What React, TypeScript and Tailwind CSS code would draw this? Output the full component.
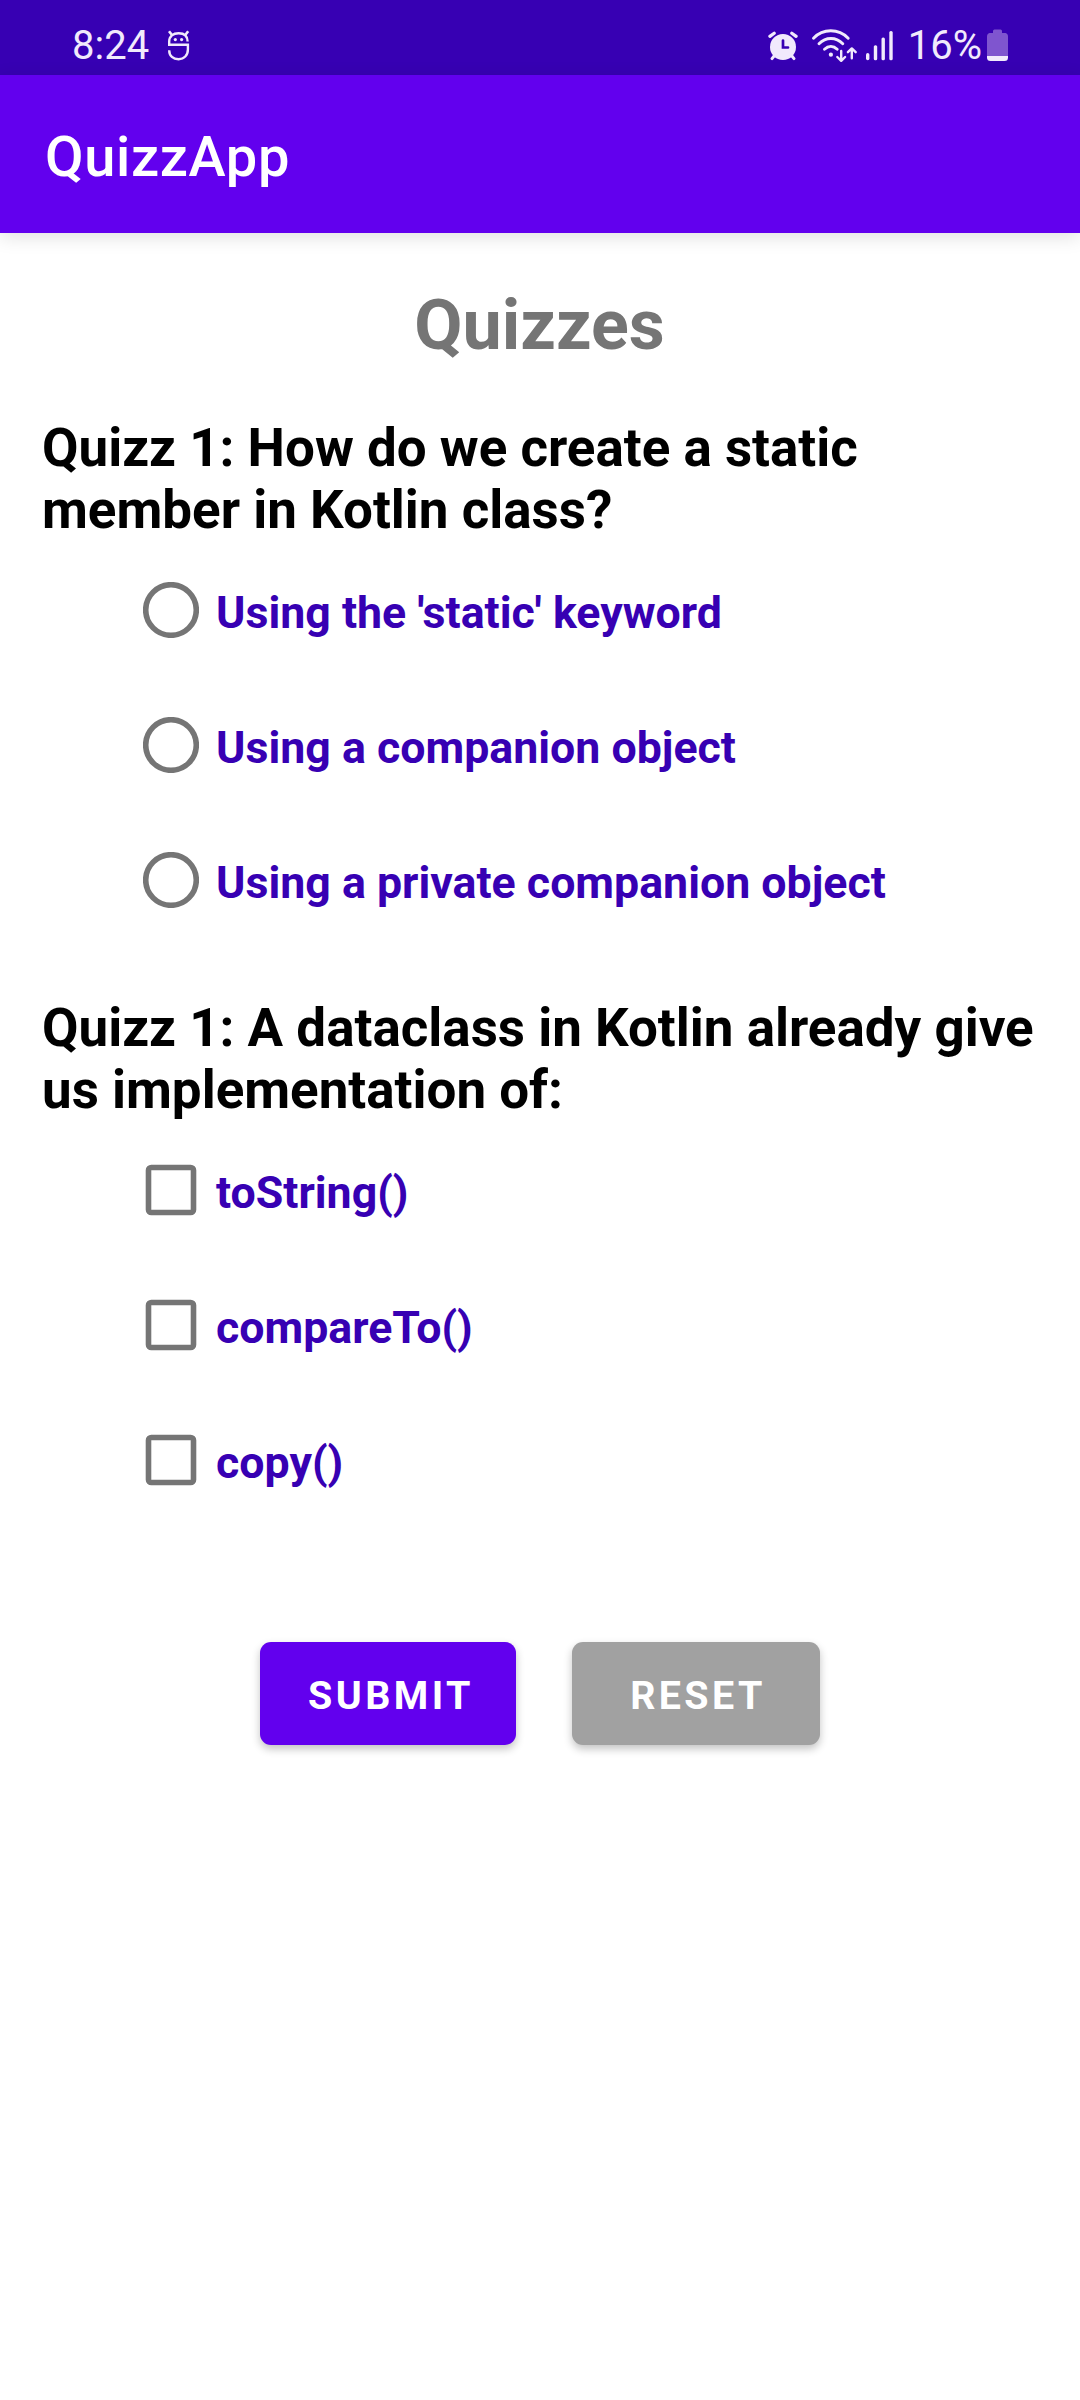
import React from "react";

function ProfileIcon() {
  return (
    <svg className="ml-[18px] mt-[30px] h-8 w-6" viewBox="0 0 24 32" fill="none" stroke="currentColor" strokeWidth="2.4">
      <path d="M2 1.2L5 5M21.2 1.2L18.2 5" strokeWidth="2.6" />
      <path d="M20.6 11.6C20.6 6 17 3.2 11.6 3.2S2.2 6 2.2 11.6V14.8H20.9V19.5C20.9 25.3 17 29.2 11.6 29.2S2.2 26 2.2 20.2" />
      <circle cx="8.3" cy="9.6" r="1.6" fill="currentColor" stroke="none" />
      <circle cx="14.6" cy="9.6" r="1.6" fill="currentColor" stroke="none" />
    </svg>
  );
}

function AlarmIcon() {
  return (
    <svg className="mt-[30px] h-8 w-[30px]" viewBox="0 0 30 32" fill="none" stroke="currentColor" strokeLinecap="round">
      <circle cx="15" cy="17" r="13" fill="currentColor" stroke="none" />
      <path d="M1.9 6.4L6.2 3.2M28.1 6.4L23.8 3.2" strokeWidth="3.2" />
      <path d="M6.5 25.5L4 28.6M23.5 25.5L26 28.6" strokeWidth="3" />
      <path d="M15 10.5V17.5H20" stroke="#3700b3" strokeWidth="2.7" />
    </svg>
  );
}

function WifiIcon() {
  return (
    <svg className="ml-[13px] mt-[28px] h-9 w-[47px]" viewBox="0 0 47 36" fill="none" stroke="currentColor" strokeLinecap="round" strokeWidth="2.9">
      <path d="M2.5 10.2C12 .3 27.5 .3 37.2 10.2" />
      <path d="M8 15.8C14.8 8.7 25 8.7 31.8 15.8" />
      <path d="M13.5 21.2C17.4 17.4 22.3 17.4 26.2 21.2" />
      <circle cx="19.9" cy="26.7" r="2.1" fill="currentColor" stroke="none" />
      <path d="M30.2 23V32.2M26.3 29L30.2 32.8L34.1 29" strokeWidth="2.4" strokeLinejoin="round" />
      <path d="M40.8 30.3V21M36.9 24.2L40.8 20.4L44.7 24.2" strokeWidth="2.4" strokeLinejoin="round" />
    </svg>
  );
}

function SignalIcon() {
  return (
    <svg className="ml-[8px] mt-[30px] h-8 w-7" viewBox="0 0 28 32" fill="currentColor">
      <rect x="0" y="23" width="3.4" height="7.3" rx="1.7" />
      <rect x="7.8" y="15.2" width="3.4" height="15.1" rx="1.5" />
      <rect x="15.5" y="7.4" width="3.4" height="22.9" rx="1.5" />
      <rect x="23.3" y="1" width="3.4" height="29.3" rx="1.5" />
    </svg>
  );
}

function BatteryIcon() {
  return (
    <svg className="ml-[5px] mt-[29px] h-8 w-[22px]" viewBox="0 0 22 32">
      <path d="M7.5 0.5H13.5Q15 .5 15 2V4H18.5Q21 4.5 21 7.5V27H0V7.5Q0 4.5 2.5 4H6V2Q6 .5 7.5 .5Z" fill="#7f55cf" />
      <path d="M0 27H21V28.5Q21 32 17.5 32H3.5Q0 32 0 28.5Z" fill="#f1eafc" />
    </svg>
  );
}

function Control({ kind }: { kind: "radio" | "checkbox" }) {
  return (
    <svg className="size-14" viewBox="0 0 56 56" fill="none" stroke="#757575" strokeWidth="5.6">
      {kind === "radio" ? (
        <circle cx="28" cy="28" r="25.3" />
      ) : (
        <rect x="5.5" y="5.5" width="45" height="45" rx="2.8" />
      )}
    </svg>
  );
}

function Question({ children }: { children: React.ReactNode }) {
  return <h2 className="pl-[42px] pr-8 text-[52.95px] font-bold leading-[62px] text-black">{children}</h2>;
}

function Options({ kind, items }: { kind: "radio" | "checkbox"; items: string[] }) {
  return (
    <ul className="pt-[1.5px]">
      {items.map((item) => (
        <li key={item} className="flex h-[135px] items-center pl-[143px]">
          <Control kind={kind} />
          <span className="pl-[17px] pt-[5px] text-[44.7px] font-bold leading-[60px] text-[#3700b3]">{item}</span>
        </li>
      ))}
    </ul>
  );
}

export default function App() {
  return (
    <div className="h-[2400px] w-[1080px] overflow-hidden bg-white font-['Roboto',sans-serif]">
      <div className="flex h-[75px] justify-between bg-[#3700b3] pl-[72px] pr-[71px] text-[40px] text-[#f1eafc]">
        <div className="flex">
          <span className="mt-[21px] leading-[50px]">8:24</span>
          <ProfileIcon />
        </div>
        <div className="flex">
          <AlarmIcon />
          <WifiIcon />
          <SignalIcon />
          <span className="ml-[14px] mt-[21px] leading-[50px]">16%</span>
          <BatteryIcon />
        </div>
      </div>
      <header className="h-[158px] bg-[#6200ee] pl-[45px] pt-[47px] text-[56px] font-medium leading-[70px] tracking-[0.0115em] text-white shadow-[0_4px_18px_rgba(0,0,0,0.12)]">
        QuizzApp
      </header>
      <main>
        <h1 className="pr-px pt-[51px] text-center text-[70px] font-bold leading-[82px] text-[#757575]">Quizzes</h1>
        <section className="pt-[51px]">
          <Question>Quizz 1: How do we create a static member in Kotlin class?</Question>
          <Options kind="radio" items={["Using the 'static' keyword", "Using a companion object", "Using a private companion object"]} />
        </section>
        <section className="pt-[49.5px]">
          <Question>Quizz 1: A dataclass in Kotlin already give us implementation of:</Question>
          <Options kind="checkbox" items={["toString()", "compareTo()", "copy()"]} />
        </section>
        <div className="flex gap-14 pl-[260px] pt-[114.5px] text-[39.4px] font-bold leading-[108px] tracking-[0.087em] text-white">
          <button className="h-[103px] w-[256px] rounded-[11px] bg-[#6200ee] pl-1.5 shadow-[0_4px_8px_rgba(0,0,0,0.24)]">SUBMIT</button>
          <button className="h-[103px] w-[248px] rounded-[11px] bg-[#a1a1a1] pl-1 shadow-[0_4px_8px_rgba(0,0,0,0.24)]">RESET</button>
        </div>
      </main>
    </div>
  );
}
